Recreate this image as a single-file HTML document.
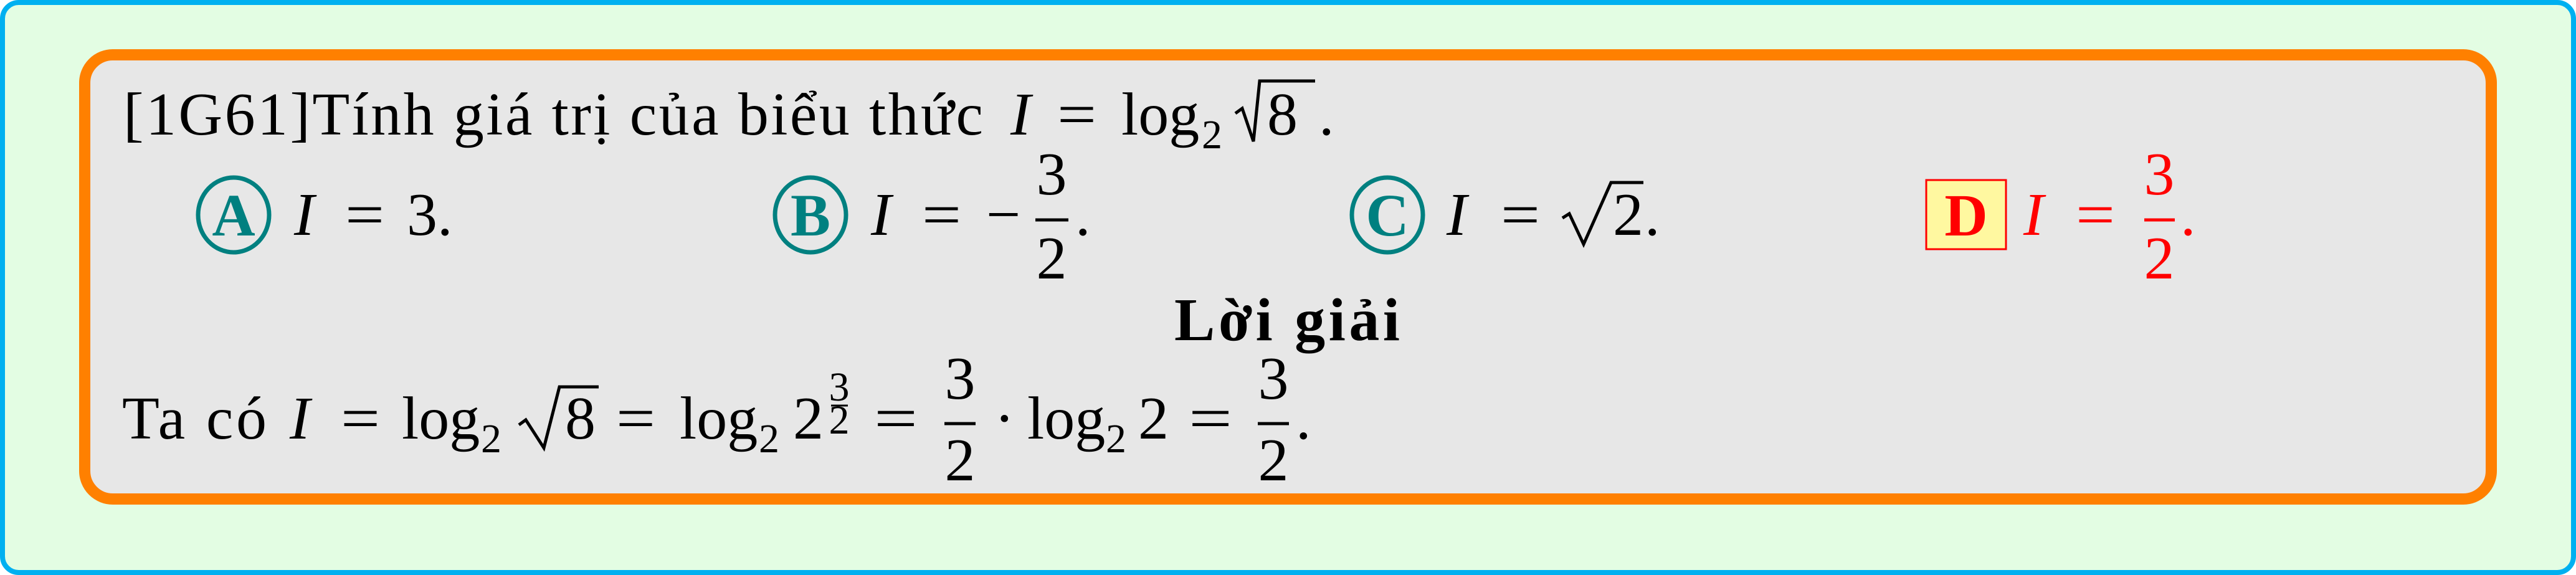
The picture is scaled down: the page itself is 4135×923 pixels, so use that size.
<!DOCTYPE html>
<html><head><meta charset="utf-8"><style>
html,body{margin:0;padding:0;background:#fff;}
svg{display:block;}
text{font-family:"Liberation Serif",serif;font-size:98px;fill:#000;}
.i{font-style:italic;}
.s{font-size:66px;}
.b{font-weight:bold;}
.tl{fill:#008080;font-weight:bold;font-size:96px;}
.r{fill:#ff0000;}
</style></head><body>
<svg width="4135" height="923" viewBox="0 0 4135 923" xmlns="http://www.w3.org/2000/svg">
<rect x="4" y="4" width="4127" height="915" rx="26" fill="#e3fde3" stroke="#00b0f0" stroke-width="8"/>
<rect x="136" y="88" width="3863" height="713" rx="45" fill="#e7e7e7" stroke="#ff8000" stroke-width="18"/>

<!-- Row 1 -->
<text x="198" y="216" textLength="1380" lengthAdjust="spacing">[1G61]Tính giá trị của biểu thức</text>
<text x="1622" y="216" class="i">I</text>
<text x="1697" y="216" textLength="63" lengthAdjust="spacingAndGlyphs">=</text>
<text x="1800" y="216">log</text>
<text x="1929" y="238" class="s">2</text>
<polyline points="1983,182 1994,174 2012,227 2022,130 2111,130" fill="none" stroke="#000" stroke-width="5"/>
<text x="2034" y="216">8</text>
<text x="2117" y="216">.</text>

<!-- A -->
<ellipse cx="375" cy="345" rx="57" ry="60" fill="none" stroke="#008080" stroke-width="7"/>
<text x="375" y="378" text-anchor="middle" class="tl">A</text>
<text x="472" y="377" class="i">I</text>
<text x="554" y="377" textLength="63" lengthAdjust="spacingAndGlyphs">=</text>
<text x="653" y="377">3.</text>

<!-- B -->
<ellipse cx="1301" cy="345" rx="57" ry="60" fill="none" stroke="#008080" stroke-width="7"/>
<text x="1301" y="378" text-anchor="middle" class="tl">B</text>
<text x="1398" y="377" class="i">I</text>
<text x="1480" y="377" textLength="63" lengthAdjust="spacingAndGlyphs">=</text>
<text x="1583" y="377">−</text>
<text x="1688" y="312" text-anchor="middle">3</text>
<line x1="1662" y1="353" x2="1715" y2="353" stroke="#000" stroke-width="5"/>
<text x="1688" y="447" text-anchor="middle">2</text>
<text x="1726" y="377">.</text>

<!-- C -->
<ellipse cx="2227" cy="345" rx="57" ry="60" fill="none" stroke="#008080" stroke-width="7"/>
<text x="2227" y="378" text-anchor="middle" class="tl">C</text>
<text x="2322" y="377" class="i">I</text>
<text x="2409" y="377" textLength="63" lengthAdjust="spacingAndGlyphs">=</text>
<polyline points="2508,350 2519,343 2542,392 2586,293 2638,293" fill="none" stroke="#000" stroke-width="5"/>
<text x="2589" y="377">2</text>
<text x="2640" y="377">.</text>

<!-- D -->
<rect x="3092" y="289" width="128" height="111" fill="#fff8a0" stroke="#ff0000" stroke-width="3"/>
<text x="3156" y="378" text-anchor="middle" class="b r" style="font-size:96px">D</text>
<text x="3248" y="377" class="i r">I</text>
<text x="3332" y="377" class="r" textLength="63" lengthAdjust="spacingAndGlyphs">=</text>
<text x="3466" y="312" text-anchor="middle" class="r">3</text>
<line x1="3442" y1="353" x2="3491" y2="353" stroke="#ff0000" stroke-width="5"/>
<text x="3466" y="447" text-anchor="middle" class="r">2</text>
<text x="3500" y="377" class="r">.</text>

<!-- Loi giai -->
<text x="1885" y="546" class="b" textLength="362" lengthAdjust="spacing">Lời giải</text>

<!-- Row 4 -->
<text x="196" y="704" textLength="232" lengthAdjust="spacing">Ta có</text>
<text x="465" y="704" class="i">I</text>
<text x="547" y="704" textLength="63" lengthAdjust="spacingAndGlyphs">=</text>
<text x="645" y="704">log</text>
<text x="772" y="726" class="s">2</text>
<polyline points="833,682 844,674 873,719 898,621 961,621" fill="none" stroke="#000" stroke-width="5"/>
<text x="907" y="704">8</text>
<text x="989" y="704" textLength="63" lengthAdjust="spacingAndGlyphs">=</text>
<text x="1091" y="704">log</text>
<text x="1218" y="726" class="s">2</text>
<text x="1273" y="704">2</text>
<text x="1347" y="643" class="s" text-anchor="middle">3</text>
<line x1="1334" y1="651" x2="1361" y2="651" stroke="#000" stroke-width="3"/>
<text x="1347" y="696" class="s" text-anchor="middle">2</text>
<text x="1403" y="704" textLength="70" lengthAdjust="spacingAndGlyphs">=</text>
<text x="1541" y="640" text-anchor="middle">3</text>
<line x1="1516" y1="680" x2="1566" y2="680" stroke="#000" stroke-width="5"/>
<text x="1541" y="771" text-anchor="middle">2</text>
<text x="1596" y="704">·</text>
<text x="1649" y="704">log</text>
<text x="1775" y="726" class="s">2</text>
<text x="1827" y="704">2</text>
<text x="1908" y="704" textLength="70" lengthAdjust="spacingAndGlyphs">=</text>
<text x="2044" y="640" text-anchor="middle">3</text>
<line x1="2019" y1="680" x2="2069" y2="680" stroke="#000" stroke-width="5"/>
<text x="2044" y="771" text-anchor="middle">2</text>
<text x="2080" y="704">.</text>
</svg>
</body></html>
